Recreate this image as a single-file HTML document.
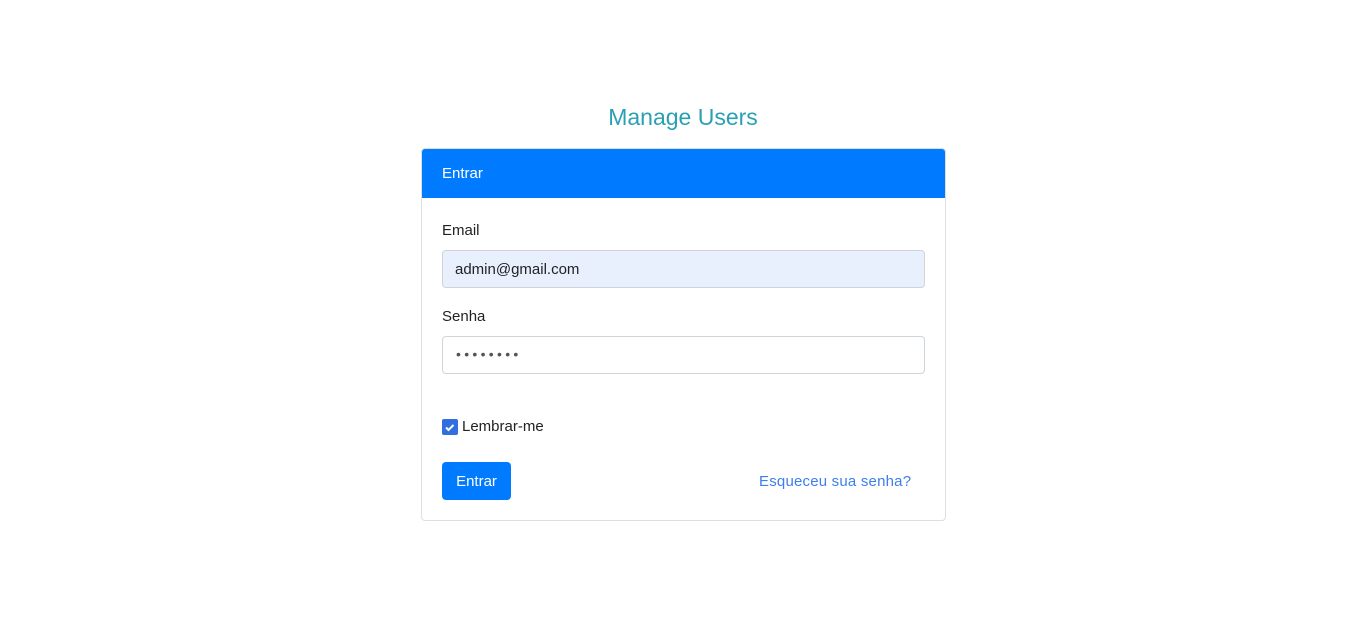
<!DOCTYPE html>
<html><head><style>
body{margin:0;width:1366px;height:617px;background:#fff;font-family:"Liberation Sans",sans-serif;position:relative;overflow:hidden}
.a{position:absolute}
</style></head><body>
<div class="a" style="left:0;width:1366px;top:104px;text-align:center;font-size:23px;color:#2aa0b4">Manage Users</div>
<div class="a" style="left:421px;top:148px;width:523px;height:371px;border:1px solid #dcdfe3;border-radius:4px;overflow:hidden">
 <div style="height:49px;background:#007bff;color:#fff;font-size:15px;line-height:49px;padding-left:20px">Entrar</div>
</div>
<div class="a" style="left:442px;top:222px;font-size:15px;color:#222">Email</div>
<div class="a" style="left:442px;top:250px;width:481px;height:36px;background:#e8f0fe;border:1px solid #ced4da;border-radius:4px"></div>
<div class="a" style="left:455px;top:261px;font-size:15px;color:#222">admin@gmail.com</div>
<div class="a" style="left:442px;top:308px;font-size:15px;color:#222">Senha</div>
<div class="a" style="left:442px;top:336px;width:481px;height:36px;background:#fff;border:1px solid #ced4da;border-radius:4px"></div>
<div class="a" style="left:456px;top:346px;font-size:14px;color:#555;letter-spacing:3.3px">••••••••</div>
<div class="a" style="left:442px;top:419px;width:16px;height:16px;background:#2f6fe0;border-radius:2px"><svg width="16" height="16"><path d="M4 8.5l2.5 2.5 5-5" stroke="#fff" stroke-width="2" fill="none"/></svg></div>
<div class="a" style="left:462px;top:418px;font-size:15px;color:#222">Lembrar-me</div>
<div class="a" style="left:442px;top:462px;width:69px;height:38px;background:#007bff;border-radius:4px;color:#fff;font-size:15px;line-height:40px;text-align:center">Entrar</div>
<div class="a" style="left:759px;top:473px;font-size:15px;color:#3d7ef0;letter-spacing:0.2px">Esqueceu sua senha?</div>
</body></html>
